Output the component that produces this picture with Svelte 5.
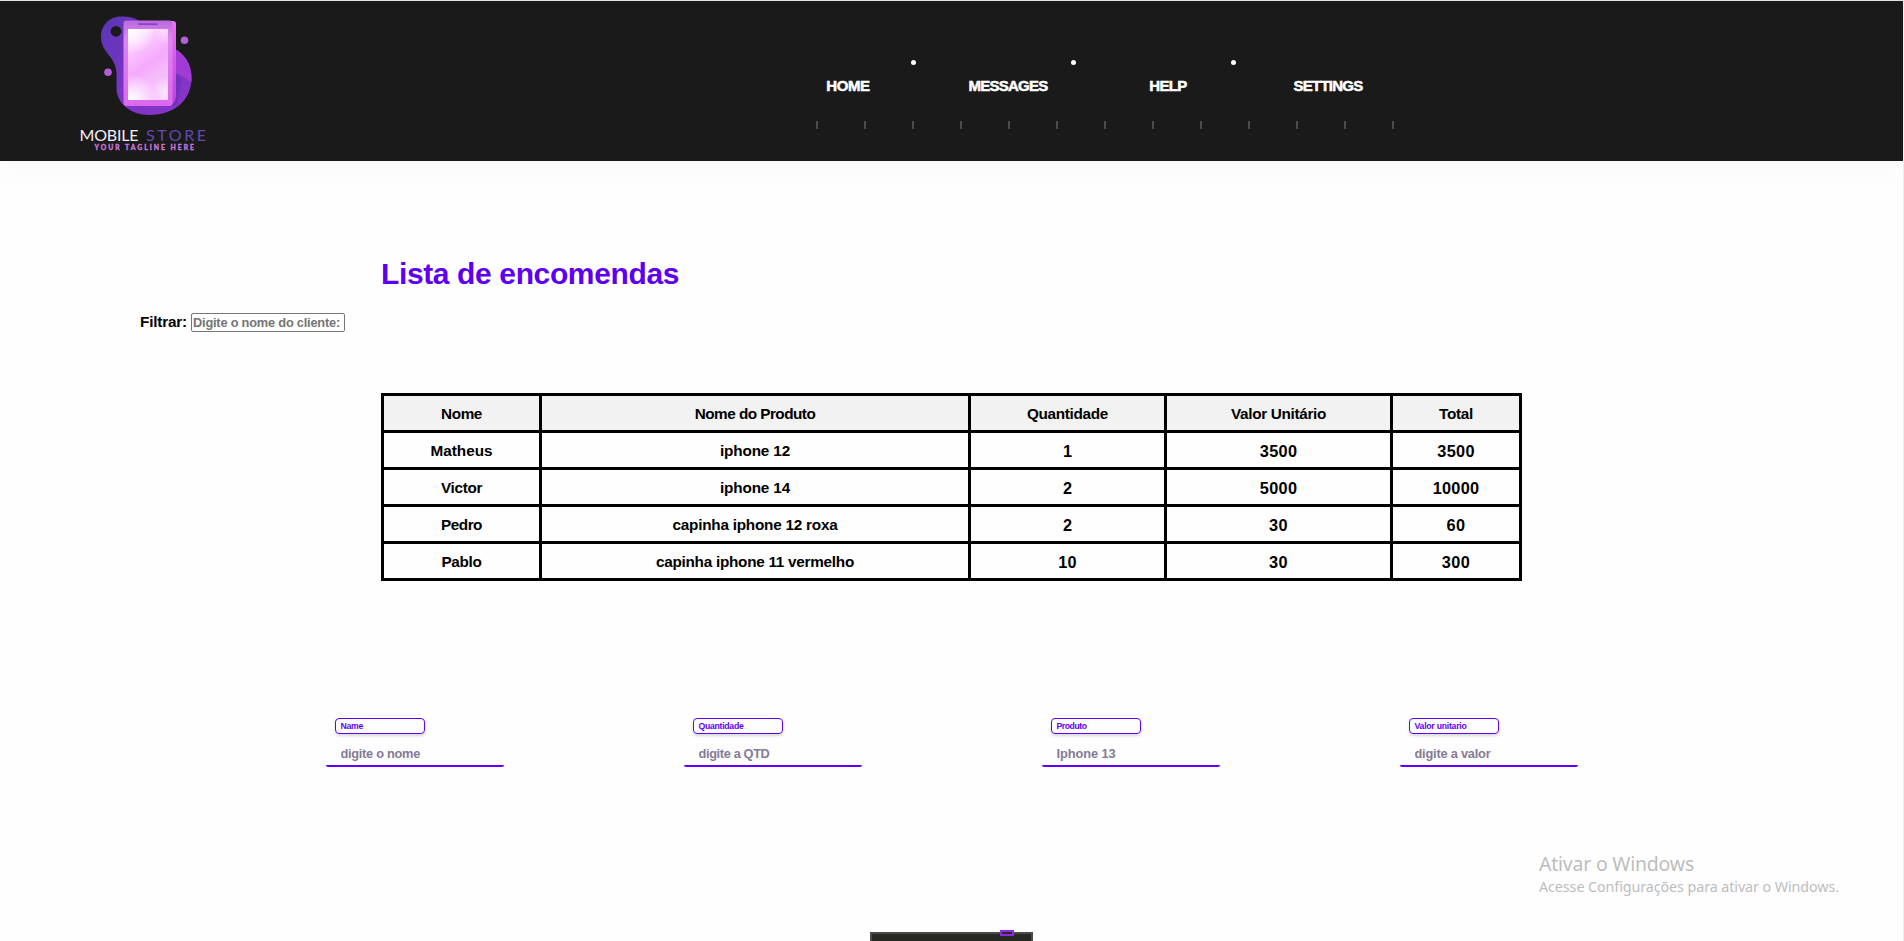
<script>
  const nav = [['HOME', 43.5], ['MESSAGES', 79], ['HELP', 37.5], ['SETTINGS', 69]];
  const ticks = Array.from({ length: 13 });
  const head = [['Nome', 41], ['Nome do Produto', 120.5], ['Quantidade', 81], ['Valor Unitário', 95], ['Total', 34]];
  const rows = [
    [['Matheus', 62], ['iphone 12', 70], ['1', 9], ['3500', 37.5], ['3500', 37.5]],
    [['Victor', 41], ['iphone 14', 70], ['2', 9], ['5000', 37.5], ['10000', 46.5]],
    [['Pedro', 41], ['capinha iphone 12 roxa', 165], ['2', 9], ['30', 19], ['60', 19]],
    [['Pablo', 40], ['capinha iphone 11 vermelho', 198], ['10', 18.5], ['30', 19], ['300', 28.5]]
  ];
  const fields = [
    ['Name', 22.5, 'digite o nome', 79.5],
    ['Quantidade', 45, 'digite a QTD', 71],
    ['Produto', 30, 'Iphone 13', 59],
    ['Valor unitario', 52, 'digite a valor', 76]
  ];

  // Spreads the letters of a text or placeholder over a given width.
  function fit(node, width) {
    const text = node.placeholder || node.textContent.trim();
    const style = getComputedStyle(node);
    const ctx = document.createElement('canvas').getContext('2d');
    ctx.font = `${style.fontWeight} ${style.fontSize} ${style.fontFamily}`;
    node.style.letterSpacing = `${(width - ctx.measureText(text).width) / text.length}px`;
  }
</script>

<div class="page">
  <header>
    <svg class="logo" width="180" height="160" viewBox="0 0 180 160">
      <defs>
        <linearGradient id="blob" x1="0" y1="0" x2="1" y2="1">
          <stop offset="0" stop-color="#5a35b5" /><stop offset=".5" stop-color="#7a35c4" /><stop offset="1" stop-color="#8b34cb" />
        </linearGradient>
        <linearGradient id="case" x1="0" y1="0" x2="0" y2="1">
          <stop offset="0" stop-color="#b969de" /><stop offset=".2" stop-color="#dc86f2" /><stop offset="1" stop-color="#db68ec" />
        </linearGradient>
        <linearGradient id="screen" gradientUnits="userSpaceOnUse" x1="66" y1="34" x2="110" y2="94">
          <stop offset="0" stop-color="#fde9ff" /><stop offset=".25" stop-color="#fac5fe" /><stop offset=".5" stop-color="#f6a9fc" /><stop offset=".7" stop-color="#f5bcfb" /><stop offset="1" stop-color="#f6c6fc" />
        </linearGradient>
        <radialGradient id="glow"><stop offset="0" stop-color="#fff" /><stop offset="1" stop-color="#fff" stop-opacity="0" /></radialGradient>
        <clipPath id="glass"><rect x="68" y="29" width="40" height="71" /></clipPath>
        <linearGradient id="side" x1="0" y1="0" x2="0" y2="1">
          <stop offset="0" stop-color="#ef73ef" /><stop offset=".5" stop-color="#d458e6" /><stop offset="1" stop-color="#b548dc" />
        </linearGradient>
      </defs>
      <path d="M61 16.500C49 16.500 41 25.500 41 37c0 16 15 19 15.500 36v15c0 15 14 27 33 27 25 0 42-15 42-37 0-14-6-22-16-28L78 20c-6-3-10-3.500-17-3.500Z" fill="url(#blob)" />
      <path d="M115 49c10 5 16 15 16.500 28v5l-16.500-10Z" fill="#a13bd6" />
      <path d="M112 72l10 6-5 27-8 2Z" fill="#512a9e" opacity=".3" />
      <circle cx="56" cy="31.300" r="5.400" fill="#1a1a1a" />
      <circle cx="124.500" cy="40.300" r="3.800" fill="#b45fda" />
      <circle cx="48" cy="72.300" r="3.800" fill="#b45fda" />
      <path d="M108 21h5q3 0 3 3v71q0 9-8 11Z" fill="url(#side)" />
      <rect x="63.500" y="20.500" width="49" height="85.500" rx="3" fill="url(#case)" />
      <rect x="68" y="29" width="40" height="71" fill="url(#screen)" />
      <g clip-path="url(#glass)">
        <circle cx="72" cy="29" r="24" fill="url(#glow)" />
        <circle cx="72" cy="100" r="26" fill="url(#glow)" />
        <circle cx="106" cy="31" r="14" fill="url(#glow)" opacity=".4" />
        <circle cx="107" cy="92" r="16" fill="url(#glow)" opacity=".6" />
      </g>
      <path d="M79 24.200h18" stroke="#8a42c5" stroke-width="1.800" stroke-linecap="round" />
      <text x="19.500" y="140.500" textLength="59" class="brand" fill="#f3effa">MOBILE</text>
      <text x="86" y="140.500" textLength="60" class="brand" fill="#6547ad">STORE</text>
      <text x="34.500" y="149.500" textLength="99.500" class="tag" fill="#c678dc" stroke="#c678dc" stroke-width=".3">YOUR TAGLINE HERE</text>
    </svg>
    <nav>
      <ul>
        {#each nav as [label, w]}<li><a href="#top" use:fit={w}>{label}</a></li>{/each}
      </ul>
      <div class="ticks">{#each ticks as _}<i></i>{/each}</div>
    </nav>
  </header>

  <main>
    <h1><span use:fit={298}>Lista de encomendas</span></h1>
    <div class="filter">
      <label for="filter" use:fit={47}>Filtrar:</label>
      <input id="filter" placeholder="Digite o nome do cliente:" use:fit={147} />
    </div>
    <table>
      <colgroup><col class="c1" /><col class="c2" /><col class="c3" /><col class="c4" /><col class="c5" /></colgroup>
      <thead>
        <tr>{#each head as [t, w]}<th><span use:fit={w}>{t}</span></th>{/each}</tr>
      </thead>
      <tbody>
        {#each rows as row}
          <tr>{#each row as [t, w], i}<td class:num={i > 1}><span use:fit={w}>{t}</span></td>{/each}</tr>
        {/each}
      </tbody>
    </table>
    <form>
      {#each fields as [label, lw, hint, hw]}
        <div class="field">
          <div class="tagbox"><span use:fit={lw}>{label}</span></div>
          <input placeholder={hint} aria-label={label} use:fit={hw} />
        </div>
      {/each}
    </form>
  </main>

  <div class="panel"><b></b></div>
  <aside>
    <p class="w1"><span use:fit={155}>Ativar o Windows</span></p>
    <p class="w2"><span use:fit={300}>Acesse Configurações para ativar o Windows.</span></p>
  </aside>
</div>

<style>
  :global(body) { margin: 0; overflow: hidden; }
  .page {
    position: relative;
    box-sizing: border-box;
    width: 1904px;
    height: 941px;
    overflow: hidden;
    display: flex;
    flex-direction: column;
    background: #fefefe;
    border-top: 1px solid #dfe5e2;
    border-right: 1px solid #eee;
    font: bold 15.3px/18px "Liberation Sans", Arial, sans-serif;
    color: #000;
  }
  header {
    flex: none;
    display: flex;
    height: 160px;
    background: #1a1a1a;
    box-shadow: 0 10px 30px rgba(0, 0, 0, .025);
  }
  .logo { flex: none; overflow: visible; margin: -1px 0 0 60px; }
  .brand { font: 400 16px "Lato", sans-serif; }
  .tag { font: 900 6.8px "Lato", sans-serif; }
  nav { margin-left: 528px; width: 640px; padding-top: 58px; }
  ul { display: flex; list-style: none; margin: 0; padding: 0; }
  li {
    position: relative;
    width: 160px;
    height: 62px;
    padding-top: 18px;
    box-sizing: border-box;
    text-align: center;
  }
  li:not(:last-child)::after {
    content: "";
    position: absolute;
    right: 12px;
    top: 1px;
    width: 5px;
    height: 5px;
    border-radius: 50%;
    background: #fff;
  }
  a { color: #fff; text-decoration: none; white-space: nowrap; font-size: 15px; -webkit-text-stroke: .5px #fff; }
  .ticks { display: flex; justify-content: space-between; width: 578px; margin-left: 48px; }
  .ticks i { width: 2px; height: 8px; background: #4b4b4b; }
  main { display: flex; flex-direction: column; }
  h1 { margin: 95px 0 0 381px; font-size: 30px; line-height: 36px; color: #5d00f2; white-space: nowrap; }
  .filter { display: flex; align-items: center; gap: 4px; margin: 20px 0 0 140px; height: 20px; }
  .filter label { line-height: 18px; width: 47px; white-space: nowrap; }
  .filter input {
    box-sizing: border-box;
    width: 154px;
    height: 19px;
    padding: 0 1px;
    border: 1px solid #767676;
    border-radius: 2px;
    background: #fff;
    font: bold 12.8px "Liberation Sans", Arial, sans-serif;
  }
  input::placeholder { color: #757575; opacity: 1; }
  table {
    width: 1141px;
    margin: 61px 0 0 381px;
    table-layout: fixed;
    border-collapse: collapse;
    text-align: center;
  }
  .c1 { width: 158px; } .c2 { width: 429px; } .c3 { width: 196px; } .c4 { width: 226px; } .c5 { width: 129px; }
  th, td { box-sizing: border-box; height: 37px; padding: 2px 0 0; border: 3px solid #000; line-height: 18px; white-space: nowrap; }
  th { background: #f2f2f2; }
  .num { font-size: 16.3px; }
  form { display: flex; gap: 180px; margin: 137px 0 0 325.5px; }
  .field { width: 178px; }
  .tagbox {
    display: flex;
    align-items: center;
    box-sizing: border-box;
    width: 90px;
    height: 16px;
    margin-left: 9.5px;
    padding-left: 4.5px;
    border: 1px solid #6200ff;
    border-radius: 4px;
    font-size: 8.7px;
    line-height: 12px;
    color: #6200ff;
    box-shadow: 0 2px 3px rgba(0, 0, 0, .15);
  }
  .field input {
    display: block;
    box-sizing: border-box;
    width: 178px;
    height: 33px;
    padding: 8px 15px 0;
    border: 0;
    border-bottom: 2px solid #6200ff;
    border-radius: 2px;
    background: transparent;
    font: bold 12.8px "Liberation Sans", Arial, sans-serif;
  }
  .field input::placeholder { color: #857a96; }
  .panel {
    position: absolute;
    left: 870px;
    top: 931px;
    box-sizing: border-box;
    width: 163px;
    height: 40px;
    border: 2px solid #4a4a4a;
    background: #272822;
  }
  .panel b { position: absolute; left: 128px; top: -4px; width: 10px; height: 2px; border: 2px solid #8a2be2; background: #272822; }
  aside { position: absolute; left: 1539px; top: 850px; color: #bdbdbd; font-family: "Noto Sans", "Open Sans", sans-serif; font-weight: 400; white-space: nowrap; }
  p { margin: 0; }
  .w1 { font-size: 19.5px; line-height: 26px; }
  .w2 { font-size: 14.3px; line-height: 20px; }
</style>
